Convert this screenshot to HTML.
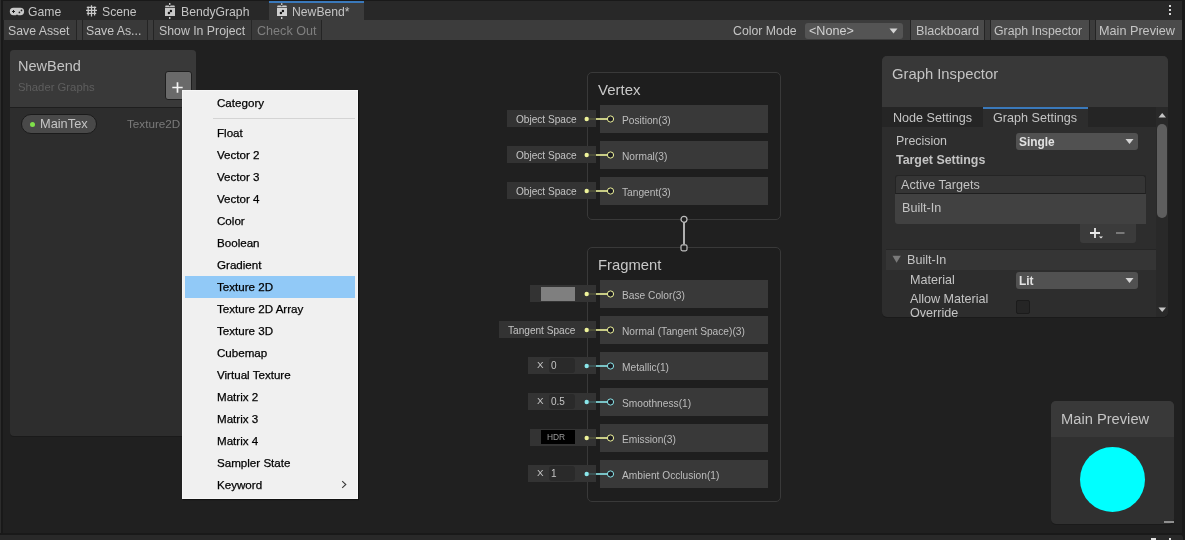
<!DOCTYPE html>
<html><head><meta charset="utf-8">
<style>
*{margin:0;padding:0;box-sizing:border-box}
html,body{width:1185px;height:540px;overflow:hidden;background:#202020;font-family:"Liberation Sans",sans-serif;color:#c4c4c4}
.a{position:absolute}
.t{position:absolute;white-space:nowrap;line-height:1;will-change:transform}
</style></head><body>
<!-- left frame -->
<div class="a" style="left:0;top:0;width:1px;height:540px;background:#2c2c2c"></div>
<div class="a" style="left:1px;top:0;width:2px;height:540px;background:#191919"></div>
<!-- tab bar -->
<div class="a" style="left:3px;top:0;width:1179px;height:20px;background:#282828;border-top:1px solid #191919"></div>
<div class="a" style="left:269px;top:1px;width:95px;height:19px;background:#3c3c3c;border-top:2px solid #3a79bb"></div>
<div class="t" style="left:27.5px;top:6px;font-size:12.2px;color:#c4c4c4">Game</div>
<div class="t" style="left:102px;top:6px;font-size:12.2px;color:#c4c4c4">Scene</div>
<div class="t" style="left:181px;top:6px;font-size:12.2px;color:#c4c4c4">BendyGraph</div>
<div class="t" style="left:292px;top:6px;font-size:12.2px;color:#c4c4c4">NewBend*</div>
<!-- toolbar -->
<div class="a" style="left:4px;top:20px;width:1178px;height:20px;background:#3c3c3c"></div>
<div class="a" style="left:4px;top:20px;width:72px;height:20px;background:#393939"></div>
<div class="a" style="left:76px;top:20px;width:1px;height:20px;background:#242424"></div>
<div class="a" style="left:82px;top:20px;width:1px;height:20px;background:#242424"></div>
<div class="a" style="left:83px;top:20px;width:64px;height:20px;background:#393939"></div>
<div class="a" style="left:147px;top:20px;width:1px;height:20px;background:#242424"></div>
<div class="a" style="left:153px;top:20px;width:1px;height:20px;background:#242424"></div>
<div class="a" style="left:154px;top:20px;width:167px;height:20px;background:#393939"></div>
<div class="a" style="left:251px;top:20px;width:1px;height:20px;background:#272727"></div>
<div class="a" style="left:321px;top:20px;width:1px;height:20px;background:#242424"></div>
<div class="t" style="left:7.5px;top:25px;font-size:12.3px">Save Asset</div>
<div class="t" style="left:86px;top:25px;font-size:12.3px">Save As...</div>
<div class="t" style="left:158.5px;top:25px;font-size:12.3px">Show In Project</div>
<div class="t" style="left:256.5px;top:25px;font-size:12.6px;color:#7f7f7f">Check Out</div>
<div class="t" style="left:733px;top:25px;font-size:12.3px">Color Mode</div>
<div class="a" style="left:805px;top:23px;width:98px;height:15.5px;background:#545454;border-radius:3px"></div>
<div class="t" style="left:808.5px;top:25px;font-size:12.6px;color:#d2d2d2">&lt;None&gt;</div>
<div class="a" style="left:910px;top:20px;width:1px;height:20px;background:#242424"></div>
<div class="a" style="left:911px;top:20px;width:73px;height:20px;background:#4a4a4a"></div>
<div class="a" style="left:984px;top:20px;width:1px;height:20px;background:#242424"></div>
<div class="a" style="left:990px;top:20px;width:1px;height:20px;background:#242424"></div>
<div class="a" style="left:991px;top:20px;width:98px;height:20px;background:#4a4a4a"></div>
<div class="a" style="left:1089px;top:20px;width:1px;height:20px;background:#242424"></div>
<div class="a" style="left:1095px;top:20px;width:1px;height:20px;background:#242424"></div>
<div class="a" style="left:1096px;top:20px;width:86px;height:20px;background:#4a4a4a"></div>
<div class="t" style="left:915.5px;top:25px;font-size:12.6px">Blackboard</div>
<div class="t" style="left:994px;top:25px;font-size:12.3px">Graph Inspector</div>
<div class="t" style="left:1099px;top:25px;font-size:12.67px">Main Preview</div>
<!-- right frame -->
<div class="a" style="left:1182px;top:0;width:3px;height:540px;background:#191919"></div>
<!-- bottom bar -->
<div class="a" style="left:0;top:533px;width:1185px;height:2px;background:#191919"></div>
<div class="a" style="left:0;top:535px;width:1183px;height:5px;background:#292929;border-top-right-radius:3px"></div>

<!-- nodes -->
<div class="a" style="left:587px;top:72px;width:194px;height:148px;background:#1e1e1e;border:1px solid #393939;border-radius:5px"></div>
<div class="t" style="left:598px;top:81.8px;font-size:15px;color:#c8c8c8">Vertex</div>
<div class="a" style="left:587px;top:247px;width:194px;height:255px;background:#1e1e1e;border:1px solid #393939;border-radius:5px"></div>
<div class="t" style="left:598px;top:257.8px;font-size:14.8px;color:#c8c8c8">Fragment</div>
<svg class="a" style="left:676px;top:211px" width="16" height="45"><line x1="8" y1="11" x2="8" y2="33.5" stroke="#c0c0c0" stroke-width="1.8"/><circle cx="8" cy="8.3" r="3" fill="#1e1e1e" stroke="#bdbdbd" stroke-width="1.2"/><rect x="5" y="33.8" width="6" height="6" rx="1.5" fill="#1e1e1e" stroke="#bdbdbd" stroke-width="1.2"/></svg>
<div class="a" style="left:600px;top:105px;width:168px;height:28px;background:#393939"></div>
<div class="t" style="left:621.5px;top:116.3px;font-size:10.2px;color:#bdbdbd">Position(3)</div>
<div class="a" style="left:507px;top:110px;width:89px;height:17px;background:#333333"></div>
<div class="t" style="left:515.6px;top:114.7px;font-size:10.1px;color:#c4c4c4">Object Space</div>
<svg class="a" style="left:580px;top:111px" width="40" height="16"><line x1="9" y1="8" x2="16" y2="8" stroke="#55573d" stroke-width="1.5"/><line x1="16" y1="8" x2="27" y2="8" stroke="#eef39a" stroke-width="1.6"/><circle cx="6.7" cy="8" r="2.2" fill="#eef39a"/><circle cx="30.5" cy="8" r="3.1" fill="#1c1c22" stroke="#eef39a" stroke-width="1"/></svg>
<div class="a" style="left:600px;top:141px;width:168px;height:28px;background:#393939"></div>
<div class="t" style="left:621.5px;top:152.3px;font-size:10.2px;color:#bdbdbd">Normal(3)</div>
<div class="a" style="left:507px;top:146px;width:89px;height:17px;background:#333333"></div>
<div class="t" style="left:515.6px;top:150.7px;font-size:10.1px;color:#c4c4c4">Object Space</div>
<svg class="a" style="left:580px;top:147px" width="40" height="16"><line x1="9" y1="8" x2="16" y2="8" stroke="#55573d" stroke-width="1.5"/><line x1="16" y1="8" x2="27" y2="8" stroke="#eef39a" stroke-width="1.6"/><circle cx="6.7" cy="8" r="2.2" fill="#eef39a"/><circle cx="30.5" cy="8" r="3.1" fill="#1c1c22" stroke="#eef39a" stroke-width="1"/></svg>
<div class="a" style="left:600px;top:177px;width:168px;height:28px;background:#393939"></div>
<div class="t" style="left:621.5px;top:188.3px;font-size:10.2px;color:#bdbdbd">Tangent(3)</div>
<div class="a" style="left:507px;top:182px;width:89px;height:17px;background:#333333"></div>
<div class="t" style="left:515.6px;top:186.7px;font-size:10.1px;color:#c4c4c4">Object Space</div>
<svg class="a" style="left:580px;top:183px" width="40" height="16"><line x1="9" y1="8" x2="16" y2="8" stroke="#55573d" stroke-width="1.5"/><line x1="16" y1="8" x2="27" y2="8" stroke="#eef39a" stroke-width="1.6"/><circle cx="6.7" cy="8" r="2.2" fill="#eef39a"/><circle cx="30.5" cy="8" r="3.1" fill="#1c1c22" stroke="#eef39a" stroke-width="1"/></svg>
<div class="a" style="left:600px;top:280px;width:168px;height:28px;background:#393939"></div>
<div class="t" style="left:621.5px;top:291.3px;font-size:10.2px;color:#bdbdbd">Base Color(3)</div>
<div class="a" style="left:530px;top:285px;width:66px;height:17px;background:#333333"></div>
<div class="a" style="left:541px;top:287px;width:34px;height:14px;background:#7f7f7f"></div>
<svg class="a" style="left:580px;top:286px" width="40" height="16"><line x1="9" y1="8" x2="16" y2="8" stroke="#55573d" stroke-width="1.5"/><line x1="16" y1="8" x2="27" y2="8" stroke="#eef39a" stroke-width="1.6"/><circle cx="6.7" cy="8" r="2.2" fill="#eef39a"/><circle cx="30.5" cy="8" r="3.1" fill="#1c1c22" stroke="#eef39a" stroke-width="1"/></svg>
<div class="a" style="left:600px;top:316px;width:168px;height:28px;background:#393939"></div>
<div class="t" style="left:621.5px;top:327.3px;font-size:10.2px;color:#bdbdbd">Normal (Tangent Space)(3)</div>
<div class="a" style="left:499px;top:321px;width:97px;height:17px;background:#333333"></div>
<div class="t" style="left:508px;top:325.7px;font-size:10.1px;color:#c4c4c4">Tangent Space</div>
<svg class="a" style="left:580px;top:322px" width="40" height="16"><line x1="9" y1="8" x2="16" y2="8" stroke="#55573d" stroke-width="1.5"/><line x1="16" y1="8" x2="27" y2="8" stroke="#eef39a" stroke-width="1.6"/><circle cx="6.7" cy="8" r="2.2" fill="#eef39a"/><circle cx="30.5" cy="8" r="3.1" fill="#1c1c22" stroke="#eef39a" stroke-width="1"/></svg>
<div class="a" style="left:600px;top:352px;width:168px;height:28px;background:#393939"></div>
<div class="t" style="left:621.5px;top:363.3px;font-size:10.2px;color:#bdbdbd">Metallic(1)</div>
<div class="a" style="left:528px;top:357px;width:68px;height:17px;background:#333333"></div>
<div class="t" style="left:536.5px;top:360.3px;font-size:9.8px;color:#c4c4c4">X</div>
<div class="a" style="left:548.5px;top:358px;width:26px;height:14.5px;background:#2a2a2a;border-radius:3px"></div>
<div class="t" style="left:551px;top:360.6px;font-size:10px;color:#c4c4c4">0</div>
<svg class="a" style="left:580px;top:358px" width="40" height="16"><line x1="9" y1="8" x2="16" y2="8" stroke="#3f5f60" stroke-width="1.5"/><line x1="16" y1="8" x2="27" y2="8" stroke="#8ae6ea" stroke-width="1.6"/><circle cx="6.7" cy="8" r="2.2" fill="#8ae6ea"/><circle cx="30.5" cy="8" r="3.1" fill="#1c1c22" stroke="#8ae6ea" stroke-width="1"/></svg>
<div class="a" style="left:600px;top:388px;width:168px;height:28px;background:#393939"></div>
<div class="t" style="left:621.5px;top:399.3px;font-size:10.2px;color:#bdbdbd">Smoothness(1)</div>
<div class="a" style="left:528px;top:393px;width:68px;height:17px;background:#333333"></div>
<div class="t" style="left:536.5px;top:396.3px;font-size:9.8px;color:#c4c4c4">X</div>
<div class="a" style="left:548.5px;top:394px;width:26px;height:14.5px;background:#2a2a2a;border-radius:3px"></div>
<div class="t" style="left:551px;top:396.6px;font-size:10px;color:#c4c4c4">0.5</div>
<svg class="a" style="left:580px;top:394px" width="40" height="16"><line x1="9" y1="8" x2="16" y2="8" stroke="#3f5f60" stroke-width="1.5"/><line x1="16" y1="8" x2="27" y2="8" stroke="#8ae6ea" stroke-width="1.6"/><circle cx="6.7" cy="8" r="2.2" fill="#8ae6ea"/><circle cx="30.5" cy="8" r="3.1" fill="#1c1c22" stroke="#8ae6ea" stroke-width="1"/></svg>
<div class="a" style="left:600px;top:424px;width:168px;height:28px;background:#393939"></div>
<div class="t" style="left:621.5px;top:435.3px;font-size:10.2px;color:#bdbdbd">Emission(3)</div>
<div class="a" style="left:530px;top:429px;width:66px;height:17px;background:#333333"></div>
<div class="a" style="left:540.7px;top:430px;width:34.6px;height:14px;background:#000"></div>
<div class="t" style="left:546.5px;top:432.5px;font-size:8.4px;color:#9a9a9a">HDR</div>
<svg class="a" style="left:580px;top:430px" width="40" height="16"><line x1="9" y1="8" x2="16" y2="8" stroke="#55573d" stroke-width="1.5"/><line x1="16" y1="8" x2="27" y2="8" stroke="#eef39a" stroke-width="1.6"/><circle cx="6.7" cy="8" r="2.2" fill="#eef39a"/><circle cx="30.5" cy="8" r="3.1" fill="#1c1c22" stroke="#eef39a" stroke-width="1"/></svg>
<div class="a" style="left:600px;top:460px;width:168px;height:28px;background:#393939"></div>
<div class="t" style="left:621.5px;top:471.3px;font-size:10.2px;color:#bdbdbd">Ambient Occlusion(1)</div>
<div class="a" style="left:528px;top:465px;width:68px;height:17px;background:#333333"></div>
<div class="t" style="left:536.5px;top:468.3px;font-size:9.8px;color:#c4c4c4">X</div>
<div class="a" style="left:548.5px;top:466px;width:26px;height:14.5px;background:#2a2a2a;border-radius:3px"></div>
<div class="t" style="left:551px;top:468.6px;font-size:10px;color:#c4c4c4">1</div>
<svg class="a" style="left:580px;top:466px" width="40" height="16"><line x1="9" y1="8" x2="16" y2="8" stroke="#3f5f60" stroke-width="1.5"/><line x1="16" y1="8" x2="27" y2="8" stroke="#8ae6ea" stroke-width="1.6"/><circle cx="6.7" cy="8" r="2.2" fill="#8ae6ea"/><circle cx="30.5" cy="8" r="3.1" fill="#1c1c22" stroke="#8ae6ea" stroke-width="1"/></svg>
<!-- /nodes -->
<!-- inspector -->
<div class="a" style="left:882px;top:56px;width:286px;height:261px;background:#2d2d2d;border-radius:5px;box-shadow:0 1px 0 #1a1a1a"></div><div class="a" style="left:882px;top:56px;width:286px;height:261px;border-radius:5px;overflow:hidden">
  <div class="a" style="left:0;top:0;width:286px;height:51px;background:#383838"></div>
  <div class="a" style="left:0;top:51px;width:274px;height:20px;background:#252525"></div>
  <div class="a" style="left:101px;top:51px;width:105px;height:20px;background:#2d2d2d;border-top:2px solid #3a79bb"></div>
  <div class="a" style="left:274px;top:51px;width:12px;height:210px;background:#292929"></div>
</div>
<div class="t" style="left:892px;top:66.5px;font-size:14.8px;color:#c4c4c4">Graph Inspector</div>
<div class="t" style="left:892.5px;top:111.5px;font-size:12.6px;color:#c4c4c4">Node Settings</div>
<div class="t" style="left:993px;top:111.5px;font-size:12.6px;color:#c4c4c4">Graph Settings</div>
<!-- scrollbar -->
<svg class="a" style="left:1157px;top:111px" width="11" height="8"><path d="M1.5 6.5 L5.2 2 L9 6.5 Z" fill="#c4c4c4"/></svg>
<div class="a" style="left:1157px;top:124px;width:10px;height:94px;background:#5e5e5e;border-radius:5px"></div>
<svg class="a" style="left:1157px;top:305.5px" width="11" height="8"><path d="M1.5 1.5 L5.2 6 L9 1.5 Z" fill="#c4c4c4"/></svg>
<div class="t" style="left:895.5px;top:134.5px;font-size:12.4px;color:#c4c4c4">Precision</div>
<div class="a" style="left:1016px;top:133px;width:122px;height:17px;background:#515151;border-radius:3px"></div>
<div class="t" style="left:1019px;top:136.5px;font-size:11.9px;font-weight:bold;color:#e2e2e2">Single</div>
<svg class="a" style="left:1124px;top:137px" width="12" height="10"><path d="M1.5 2 L9.5 2 L5.5 7 Z" fill="#d4d4d4"/></svg>
<div class="t" style="left:895.5px;top:153.5px;font-size:12.4px;font-weight:bold;color:#c4c4c4">Target Settings</div>
<!-- list -->
<div class="a" style="left:895px;top:175px;width:251px;height:19px;background:#353535;border:1px solid #242424;border-bottom-color:#1f1f1f;border-radius:3px 3px 0 0"></div>
<div class="a" style="left:895px;top:194px;width:251px;height:30px;background:#414141;border-radius:0 0 0 3px"></div>
<div class="t" style="left:901.4px;top:179px;font-size:12.6px;color:#c4c4c4">Active Targets</div>
<div class="t" style="left:902.3px;top:202px;font-size:12.6px;color:#c4c4c4">Built-In</div>
<div class="a" style="left:1080px;top:224px;width:56px;height:19px;background:#3b3b3b;border-radius:0 0 3px 3px"></div>
<svg class="a" style="left:1086px;top:224px" width="44" height="18"><path d="M9 4 V14 M4 9 H14" stroke="#e8e8e8" stroke-width="1.8"/><path d="M13 12.5 H17 L15 14.5 Z" fill="#e8e8e8"/><path d="M30 9 H38.5" stroke="#8a8a8a" stroke-width="1.6"/></svg>
<!-- built-in foldout -->
<div class="a" style="left:886px;top:249px;width:270px;height:1px;background:#262626"></div>
<div class="a" style="left:886px;top:250px;width:270px;height:20px;background:#353535"></div>
<svg class="a" style="left:891px;top:254px" width="12" height="10"><path d="M1.5 1.8 L9.8 1.8 L5.6 8.8 Z" fill="#7a7a7a"/></svg>
<div class="t" style="left:907.4px;top:253.5px;font-size:12.6px;color:#c4c4c4">Built-In</div>
<div class="t" style="left:910.4px;top:274px;font-size:12.6px;color:#c4c4c4">Material</div>
<div class="a" style="left:1016px;top:272px;width:122px;height:17px;background:#515151;border-radius:3px"></div>
<div class="t" style="left:1019px;top:275.5px;font-size:11.9px;font-weight:bold;color:#e2e2e2">Lit</div>
<svg class="a" style="left:1124px;top:276px" width="12" height="10"><path d="M1.5 2 L9.5 2 L5.5 7 Z" fill="#d4d4d4"/></svg>
<div class="a" style="left:882px;top:290px;width:274px;height:27px;overflow:hidden">
  <div class="t" style="left:28.4px;top:2.5px;font-size:12.6px;color:#c4c4c4">Allow Material</div>
  <div class="t" style="left:28.4px;top:17px;font-size:12.6px;color:#c4c4c4">Override</div>
</div>
<div class="a" style="left:1015.5px;top:300px;width:14px;height:14px;background:#252525;border:1px solid #1b1b1b;border-radius:2px"></div>
<!-- /inspector -->
<!-- preview -->
<div class="a" style="left:1051px;top:401px;width:123px;height:123px;background:#303030;border-radius:5px;box-shadow:0 1px 0 #1a1a1a"></div><div class="a" style="left:1051px;top:401px;width:123px;height:123px;border-radius:5px;overflow:hidden">
  <div class="a" style="left:0;top:0;width:123px;height:36px;background:#393939"></div>
</div>
<div class="t" style="left:1061px;top:412px;font-size:14.7px;color:#c4c4c4">Main Preview</div>
<div class="a" style="left:1080px;top:447px;width:65px;height:65px;background:#00ffff;border-radius:50%"></div>
<div class="a" style="left:1164px;top:521px;width:10px;height:2px;background:#8f8f8f"></div>
<!-- /preview -->

<!-- blackboard -->
<div class="a" style="left:10px;top:50px;width:186px;height:386px;background:#2d2d2d;border-radius:4px;overflow:hidden;box-shadow:0 1px 0 #1a1a1a"></div><div class="a" style="left:10px;top:50px;width:186px;height:386px;border-radius:4px;overflow:hidden">
  <div class="a" style="left:0;top:0;width:186px;height:58px;background:#393939;border-bottom:1.5px solid #1e1e1e"></div>
</div>
<div class="t" style="left:17.5px;top:59px;font-size:14.5px;color:#c4c4c4">NewBend</div>
<div class="t" style="left:17.5px;top:82px;font-size:11.3px;color:#5e5e5e">Shader Graphs</div>
<div class="a" style="left:164.5px;top:71px;width:27px;height:28.5px;background:#6a6a6a;border:1px solid #1f1f1f;border-radius:3px"></div>
<div class="a" style="left:20.5px;top:113.5px;width:76px;height:20.5px;background:#494949;border:1.3px solid #1b1b1b;border-radius:10.5px"></div>
<div class="a" style="left:30px;top:122px;width:5px;height:5px;background:#7fe04a;border-radius:50%"></div>
<div class="t" style="left:39.5px;top:118px;font-size:12.8px;color:#c4c4c4">MainTex</div>
<div class="t" style="left:127px;top:118px;font-size:11.7px;color:#7a7a7a">Texture2D</div>

<!-- icons -->
<svg class="a" style="left:8px;top:5px" width="18" height="12" viewBox="0 0 18 12">
<path d="M5.5 2.8 H12.4 A3.7 3.7 0 0 1 12.4 10.2 H10.3 L9 9.4 L7.7 10.2 H5.5 A3.7 3.7 0 0 1 5.5 2.8 Z" fill="#c8c8c8"/>
<path d="M5.5 5 V8 M4 6.5 H7" stroke="#1e1e1e" stroke-width="1"/>
<circle cx="13.5" cy="5.4" r="0.85" fill="#1e1e1e"/><circle cx="11.4" cy="7.4" r="0.85" fill="#1e1e1e"/>
</svg>
<svg class="a" style="left:85px;top:4px" width="13" height="13" viewBox="0 0 13 13">
<path d="M3.2 2.5 V11.5 M6.5 1.2 V12.5 M9.6 2.5 V11.5 M1.8 3.3 H11.2 M1 6.3 H12 M1.8 9.3 H11.2" stroke="#c8c8c8" stroke-width="1.25"/>
</svg>
<svg class="a" style="left:164px;top:2px" width="12" height="18" viewBox="0 0 12 18">
<rect x="5" y="1" width="1.4" height="2.2" fill="#c8c8c8"/>
<path d="M1.6 3.4 H10.4 L11 5.2 H1 Z" fill="#c8c8c8"/>
<circle cx="5.7" cy="3.6" r="0.8" fill="#202020"/>
<rect x="1" y="6" width="10" height="8" fill="#c8c8c8"/>
<circle cx="6.9" cy="9" r="1.2" fill="#151515"/><circle cx="4.9" cy="11" r="1.2" fill="#151515"/>
<rect x="5" y="15" width="1.4" height="2" fill="#c8c8c8"/>
</svg>
<svg class="a" style="left:276px;top:2px" width="12" height="18" viewBox="0 0 12 18">
<rect x="5" y="1.3" width="1.4" height="2" fill="#d0d0d0"/>
<path d="M1.6 3.4 H10.4 L11 5.2 H1 Z" fill="#d0d0d0"/>
<circle cx="5.7" cy="3.6" r="0.8" fill="#3c3c3c"/>
<rect x="1" y="6" width="10" height="8" fill="#d0d0d0"/>
<circle cx="6.9" cy="9" r="1.2" fill="#151515"/><circle cx="4.9" cy="11" r="1.2" fill="#151515"/>
<rect x="5" y="15" width="1.4" height="2" fill="#d0d0d0"/>
</svg>
<div class="a" style="left:1169px;top:5px;width:2px;height:2px;background:#d8d8d8"></div>
<div class="a" style="left:1169px;top:9px;width:2px;height:2px;background:#d8d8d8"></div>
<div class="a" style="left:1169px;top:13px;width:2px;height:2px;background:#d8d8d8"></div>
<svg class="a" style="left:888px;top:27px" width="12" height="10"><path d="M1.5 1.5 L9.5 1.5 L5.5 6.5 Z" fill="#d4d4d4"/></svg>
<svg class="a" style="left:170px;top:79.5px" width="15" height="15"><path d="M7.5 2.3 V12.7 M2.3 7.5 H12.7" stroke="#f4f4f4" stroke-width="1.7"/></svg>
<div class="a" style="left:1151px;top:538px;width:5px;height:2px;background:#e0e0e0"></div>
<div class="a" style="left:1169px;top:538px;width:2px;height:2px;background:#e0e0e0"></div>
<!-- /icons -->

<!-- menu -->
<div class="a" style="left:182px;top:90px;width:176px;height:409px;background:#f0f0f0;border:1px solid #f6f6f6;box-shadow:1px 1px 1px rgba(0,0,0,.5)"></div>
<div class="a" style="left:185px;top:276px;width:170px;height:21.5px;background:#91c9f7"></div>
<div class="a" style="left:213px;top:118px;width:142px;height:1px;background:#d4d4d4"></div>
<div class="t" style="left:217px;top:97px;font-size:11.6px;color:#000;-webkit-text-stroke:0.25px #000">Category</div>
<div class="t" style="left:217px;top:127px;font-size:11.6px;color:#000;-webkit-text-stroke:0.25px #000">Float</div>
<div class="t" style="left:217px;top:149px;font-size:11.6px;color:#000;-webkit-text-stroke:0.25px #000">Vector 2</div>
<div class="t" style="left:217px;top:171px;font-size:11.6px;color:#000;-webkit-text-stroke:0.25px #000">Vector 3</div>
<div class="t" style="left:217px;top:193px;font-size:11.6px;color:#000;-webkit-text-stroke:0.25px #000">Vector 4</div>
<div class="t" style="left:217px;top:215px;font-size:11.6px;color:#000;-webkit-text-stroke:0.25px #000">Color</div>
<div class="t" style="left:217px;top:237px;font-size:11.6px;color:#000;-webkit-text-stroke:0.25px #000">Boolean</div>
<div class="t" style="left:217px;top:259px;font-size:11.6px;color:#000;-webkit-text-stroke:0.25px #000">Gradient</div>
<div class="t" style="left:217px;top:281px;font-size:11.6px;color:#000;-webkit-text-stroke:0.25px #000">Texture 2D</div>
<div class="t" style="left:217px;top:303px;font-size:11.6px;color:#000;-webkit-text-stroke:0.25px #000">Texture 2D Array</div>
<div class="t" style="left:217px;top:325px;font-size:11.6px;color:#000;-webkit-text-stroke:0.25px #000">Texture 3D</div>
<div class="t" style="left:217px;top:347px;font-size:11.6px;color:#000;-webkit-text-stroke:0.25px #000">Cubemap</div>
<div class="t" style="left:217px;top:369px;font-size:11.6px;color:#000;-webkit-text-stroke:0.25px #000">Virtual Texture</div>
<div class="t" style="left:217px;top:391px;font-size:11.6px;color:#000;-webkit-text-stroke:0.25px #000">Matrix 2</div>
<div class="t" style="left:217px;top:413px;font-size:11.6px;color:#000;-webkit-text-stroke:0.25px #000">Matrix 3</div>
<div class="t" style="left:217px;top:435px;font-size:11.6px;color:#000;-webkit-text-stroke:0.25px #000">Matrix 4</div>
<div class="t" style="left:217px;top:457px;font-size:11.6px;color:#000;-webkit-text-stroke:0.25px #000">Sampler State</div>
<div class="t" style="left:217px;top:479px;font-size:11.6px;color:#000;-webkit-text-stroke:0.25px #000">Keyword</div>
<svg class="a" style="left:340px;top:480px" width="8" height="9"><path d="M2.2 1.2 L5.8 4.5 L2.2 7.8" stroke="#3a3a3a" stroke-width="1.1" fill="none"/></svg>
</body></html>
